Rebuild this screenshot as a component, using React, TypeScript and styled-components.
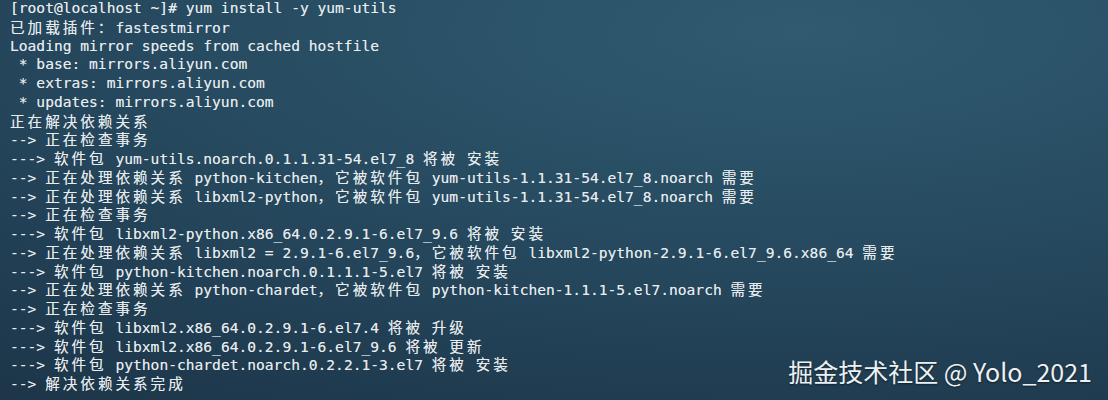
import React from 'react';
import styled, { createGlobalStyle } from 'styled-components';

const GlobalStyle = createGlobalStyle`
  html, body {
    margin: 0;
    padding: 0;
    background: #1f3a4d;
  }
`;

const Screen = styled.div`
  position: relative;
  width: 1108px;
  height: 400px;
  overflow: hidden;
  background: radial-gradient(ellipse 120% 110% at 72% 8%, #2f5a70 0%, #284d63 40%, #1d364a 100%);
`;

const Terminal = styled.pre`
  margin: 0;
  padding: 0 0 0 10px;
  font-family: "DejaVu Sans Mono", "Liberation Mono", "Noto Sans CJK SC", monospace;
  font-size: 14.6px;
  line-height: 18.75px;
  color: #e8ecee;
  text-shadow: 0 0 0.6px rgba(232, 236, 238, 0.6);
  white-space: pre;
  transform: translateY(-1px);
`;

const Line = styled.div`
  height: 18.75px;
`;

const Wide = styled.span`
  font-family: "Noto Sans CJK SC", sans-serif;
  letter-spacing: 2.98px;
`;

const Watermark = styled.div`
  position: absolute;
  right: 16px;
  bottom: 11px;
  font-family: "Noto Sans CJK SC", "Noto Sans", sans-serif;
  font-size: 25px;
  color: #eef1f3;
  text-shadow: 0 1px 2px rgba(0, 0, 0, 0.5);
  white-space: nowrap;
`;

const lines = [
  '[root@localhost ~]# yum install -y yum-utils',
  '已加载插件：fastestmirror',
  'Loading mirror speeds from cached hostfile',
  ' * base: mirrors.aliyun.com',
  ' * extras: mirrors.aliyun.com',
  ' * updates: mirrors.aliyun.com',
  '正在解决依赖关系',
  '--> 正在检查事务',
  '---> 软件包 yum-utils.noarch.0.1.1.31-54.el7_8 将被 安装',
  '--> 正在处理依赖关系 python-kitchen，它被软件包 yum-utils-1.1.31-54.el7_8.noarch 需要',
  '--> 正在处理依赖关系 libxml2-python，它被软件包 yum-utils-1.1.31-54.el7_8.noarch 需要',
  '--> 正在检查事务',
  '---> 软件包 libxml2-python.x86_64.0.2.9.1-6.el7_9.6 将被 安装',
  '--> 正在处理依赖关系 libxml2 = 2.9.1-6.el7_9.6，它被软件包 libxml2-python-2.9.1-6.el7_9.6.x86_64 需要',
  '---> 软件包 python-kitchen.noarch.0.1.1.1-5.el7 将被 安装',
  '--> 正在处理依赖关系 python-chardet，它被软件包 python-kitchen-1.1.1-5.el7.noarch 需要',
  '--> 正在检查事务',
  '---> 软件包 libxml2.x86_64.0.2.9.1-6.el7.4 将被 升级',
  '---> 软件包 libxml2.x86_64.0.2.9.1-6.el7_9.6 将被 更新',
  '---> 软件包 python-chardet.noarch.0.2.2.1-3.el7 将被 安装',
  '--> 解决依赖关系完成',
];

// split a line in runs of wide (CJK) and narrow chars, so wide ones take two cells
const splitRuns = (text: string) => text.split(/([\u3000-\u9fff\uff00-\uffef]+)/).filter(Boolean);
const isWide = (s: string) => /[\u3000-\u9fff\uff00-\uffef]/.test(s);

const App: React.FC = () => {
  return (
    <>
      <GlobalStyle />
      <Screen>
        <Terminal>
          {lines.map((line, i) => (
            <Line key={i}>
              {splitRuns(line).map((run, j) =>
                isWide(run) ? <Wide key={j}>{run}</Wide> : <span key={j}>{run}</span>
              )}
            </Line>
          ))}
        </Terminal>
        <Watermark>掘金技术社区 @ Yolo_2021</Watermark>
      </Screen>
    </>
  );
};

export default App;
